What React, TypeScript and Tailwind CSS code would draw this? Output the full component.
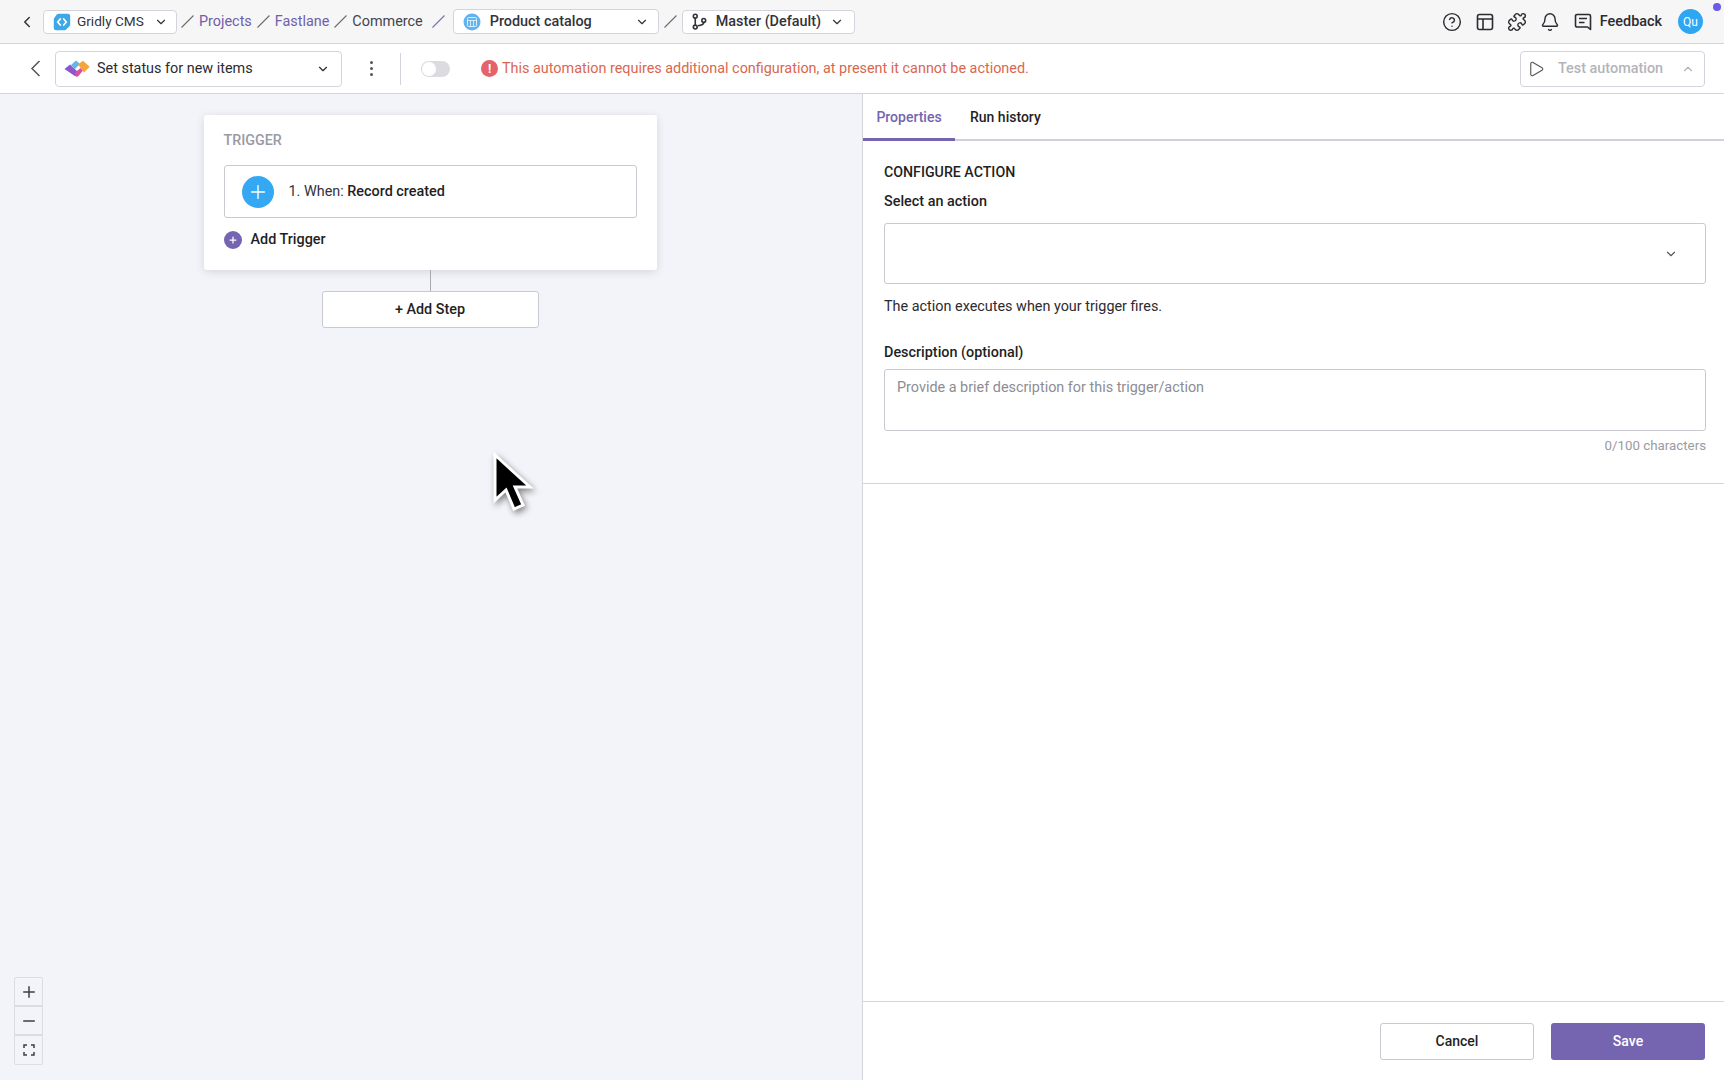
import { ChevronDown, ChevronLeft, ChevronUp, CircleHelp, Bell, Minus, Play, Plus, Puzzle } from 'lucide-react';

function Slash({ purple }: { purple?: boolean }) {
  return (
    <svg width="13" height="13" viewBox="0 0 13 13" className="shrink-0">
      <path d="M.5 12.500 12.500.5" stroke={purple ? '#7b6cb5' : '#6b6b72'} strokeWidth="1.100" fill="none" />
    </svg>
  );
}

function GridlyLogo() {
  return (
    <svg width="18" height="18" viewBox="0 0 18 18" className="shrink-0">
      <path d="M5.500.8h9.200a2.500 2.500 0 0 1 2.500 2.500v8.200a2.500 2.500 0 0 1-.8 1.800l-3.200 3.200a2.500 2.500 0 0 1-1.700.7H3.300a2.500 2.500 0 0 1-2.500-2.500V6.300a2.500 2.500 0 0 1 .8-1.800l2.200-3a2.500 2.500 0 0 1 1.700-.7z" fill="#3ea8e6" />
      <path d="M7.300 6 4.700 9l2.600 3M10.700 6l2.600 3-2.600 3" stroke="#fff" strokeWidth="1.700" fill="none" strokeLinecap="round" strokeLinejoin="round" />
    </svg>
  );
}

function CatalogLogo() {
  return (
    <svg width="18" height="18" viewBox="0 0 18 18" className="shrink-0">
      <circle cx="9" cy="9" r="8.500" fill="#62b3ee" />
      <rect x="4.500" y="4.500" width="9" height="9" rx="1" fill="none" stroke="#dbeefb" strokeWidth="1" />
      <path d="M4.500 7.500h9M7.500 7.500v6M10.500 7.500v6" stroke="#dbeefb" strokeWidth="0.900" />
    </svg>
  );
}

function AutomationLogo() {
  return (
    <svg width="26" height="17" viewBox="0 0 26 17" className="shrink-0">
      <path d="M7 5 12 .5 16 4l-5 5z" fill="#5cb8e8" />
      <path d="M.5 9 6 4.500l7.500 7L11.500 16.500z" fill="#8f55cf" />
      <path d="M11 12.500 16.500 8l2.500 2.500-4.500 5.500q-1 1-2.500.5z" fill="#dc4f9f" />
      <path d="M14 4.500 19 .8l6.700 6L20 12.500z" fill="#f5a53a" />
    </svg>
  );
}

function BranchIcon() {
  return (
    <svg width="17" height="17" viewBox="0 0 16 16" fill="none" stroke="#33333a" strokeWidth="1.500" className="shrink-0">
      <circle cx="4" cy="3" r="1.800" />
      <circle cx="4" cy="13.200" r="1.800" />
      <circle cx="12" cy="7" r="1.800" />
      <path d="M4 4.800v6.600M12 8.800c0 2.600-3 3-5.500 3.200" />
    </svg>
  );
}

function LayoutIcon() {
  return (
    <svg width="18" height="18" viewBox="0 0 18 18" fill="none" stroke="#2b2b31" strokeWidth="1.600">
      <rect x="1.500" y="1.500" width="15" height="15" rx="2" />
      <path d="M1.500 6h15M7 6v10.500" />
    </svg>
  );
}

function FeedbackIcon() {
  return (
    <svg width="18" height="18" viewBox="0 0 18 18" fill="none" stroke="#2b2b31" strokeWidth="1.600">
      <path d="M16.500 16.500 13.500 14H3a1.500 1.500 0 0 1-1.500-1.500V3A1.500 1.500 0 0 1 3 1.500h12A1.500 1.500 0 0 1 16.500 3z" strokeLinejoin="round" />
      <path d="M5 5.500h8M5 9.500h5.500" />
    </svg>
  );
}

function FitIcon() {
  return (
    <svg width="12" height="12" viewBox="0 0 12 12" fill="none" stroke="#3f3f46" strokeWidth="1.500">
      <path d="M1 4V1h3M8 1h3v3M11 8v3H8M4 11H1V8" />
    </svg>
  );
}

function BackArrow() {
  return (
    <svg width="11" height="17" viewBox="0 0 11 17" fill="none" stroke="#55555c" strokeWidth="1.500" className="shrink-0">
      <path d="M9.500 1 2 8.500 9.500 16" />
    </svg>
  );
}

function Cursor() {
  return (
    <svg width="42" height="62" viewBox="0 0 42 62" className="absolute left-[492px] top-[452px] drop-shadow-[2px_3px_3px_rgba(0,0,0,0.45)]">
      <path d="M3 3v45l11-10 8 19 9-4-8-18h15z" fill="#000" stroke="#fff" strokeWidth="3" strokeLinejoin="miter" />
    </svg>
  );
}

function Crumb({ children, purple }: { children: string; purple?: boolean }) {
  return <span className={purple ? 'text-[#6f60a8]' : 'text-[#44444c]'}>{children}</span>;
}

function TopBar() {
  return (
    <div className="flex h-[44px] shrink-0 items-center border-b border-[#d5d3de] bg-[#f6f6f7] pl-[18px] pr-[21px] text-[14.4px]">
      <ChevronLeft size={18} className="mr-[7px] shrink-0 text-[#33333a]" strokeWidth={2} />
      <div className="flex h-[24px] w-[134px] items-center rounded-[4px] border border-[#d5d3de] bg-white pl-[9px] pr-[8px] text-[13.6px] text-[#33333a]">
        <GridlyLogo />
        <span className="ml-[6px]">Gridly CMS</span>
        <ChevronDown size={14} className="ml-auto text-[#33333a]" />
      </div>
      <div className="ml-[4px] flex items-center gap-[5px]">
        <Slash />
        <Crumb purple>Projects</Crumb>
        <Slash />
        <Crumb purple>Fastlane</Crumb>
        <Slash />
        <Crumb>Commerce</Crumb>
      </div>
      <div className="ml-[9px]">
        <Slash purple />
      </div>
      <div className="ml-[8px] flex h-[25px] w-[206px] items-center rounded-[4px] border border-[#d5d3de] bg-white pl-[9px] pr-[9px] font-medium text-[#33333a]">
        <CatalogLogo />
        <span className="ml-[9px]">Product catalog</span>
        <ChevronDown size={14} className="ml-auto" />
      </div>
      <div className="mx-[5px]">
        <Slash />
      </div>
      <div className="flex h-[24px] w-[173px] items-center rounded-[4px] border border-[#d5d3de] bg-white pl-[8px] pr-[10px] font-medium text-[#33333a]">
        <BranchIcon />
        <span className="ml-[8px]">Master (Default)</span>
        <ChevronDown size={14} className="ml-auto" />
      </div>
      <div className="relative ml-auto flex items-center text-[#2b2b31]">
        <CircleHelp size={20} strokeWidth={1.7} />
        <div className="ml-[14px]"><LayoutIcon /></div>
        <Puzzle size={20} strokeWidth={1.7} className="ml-[13px]" />
        <Bell size={20} strokeWidth={1.7} className="ml-[13px]" />
        <div className="ml-[14px]"><FeedbackIcon /></div>
        <span className="ml-[8px] font-medium">Feedback</span>
        <div className="ml-[16px] flex h-[25px] w-[25px] items-center justify-center rounded-full bg-[#2ea6f2] text-[12px] text-white">Qu</div>
        <div className="absolute right-[-18px] top-[-6px] h-[8px] w-[8px] rounded-full bg-[#6a5be8]" />
      </div>
    </div>
  );
}

function AutomationBar() {
  return (
    <div className="flex h-[50px] shrink-0 items-center border-b border-[#d5d3de] bg-white pl-[30px] pr-[19px] text-[14.4px]">
      <BackArrow />
      <div className="ml-[14px] flex h-[36px] w-[287px] items-center rounded-[4px] border border-[#d5d3de] pl-[8px] pr-[11px] text-[#2b2b31]">
        <AutomationLogo />
        <span className="ml-[7px]">Set status for new items</span>
        <ChevronDown size={14} className="ml-auto" />
      </div>
      <div className="ml-[28px] flex flex-col gap-[3px]">
        <div className="h-[3px] w-[3px] rounded-full bg-[#55555c]" />
        <div className="h-[3px] w-[3px] rounded-full bg-[#55555c]" />
        <div className="h-[3px] w-[3px] rounded-full bg-[#55555c]" />
      </div>
      <div className="ml-[27px] h-[32px] w-px bg-[#d5d3de]" />
      <div className="ml-[20px] flex h-[16px] w-[29px] items-center rounded-full bg-[#dcdce0] pl-[1px]">
        <div className="h-[14px] w-[14px] rounded-full bg-white" />
      </div>
      <div className="ml-[31px] flex h-[17px] w-[17px] items-center justify-center rounded-full bg-[#e5636b] text-[12px] font-bold text-white">!</div>
      <span className="ml-[4px] text-[#d9674f]">This automation requires additional configuration, at present it cannot be actioned.</span>
      <div className="ml-auto flex h-[36px] w-[185px] items-center rounded-[4px] border border-[#d5d3de] pl-[6px] pr-[9px]">
        <Play size={18} strokeWidth={1.5} className="text-[#55555c]" />
        <span className="ml-[13px] font-medium text-[#b4b4bb]">Test automation</span>
        <ChevronUp size={14} className="ml-auto text-[#b4b4bb]" />
      </div>
    </div>
  );
}

function Canvas() {
  return (
    <div className="relative flex w-[862px] shrink-0 flex-col items-center bg-[#f3f4f9] pr-[2px] pt-[21px] text-[14.4px]">
      <div className="h-[155px] w-[453px] rounded-[3px] bg-white px-[20px] pt-[17px] shadow-[0_2px_10px_rgba(0,0,0,0.12)]">
        <div className="text-[14.3px] font-medium leading-[16px] text-[#9a9aa3]">TRIGGER</div>
        <div className="mt-[17px] flex h-[53px] items-center rounded-[3px] border border-[#c9c9d2] pl-[17px]">
          <div className="flex h-[32px] w-[32px] items-center justify-center rounded-full bg-[#35a8f3]">
            <Plus size={22} strokeWidth={1.5} className="text-white" />
          </div>
          <span className="ml-[15px] text-[#33333a]">1. When: <span className="font-medium text-[#1f1f24]">Record created</span></span>
        </div>
        <div className="mt-[11px] flex items-center">
          <div className="flex h-[18px] w-[18px] items-center justify-center rounded-full bg-[#7565b0]">
            <Plus size={10} strokeWidth={3} className="text-white" />
          </div>
          <span className="ml-[9px] font-medium text-[#1f1f24]">Add Trigger</span>
        </div>
      </div>
      <div className="h-[21px] w-px bg-[#a9a9b2]" />
      <div className="flex h-[37px] w-[217px] items-center justify-center rounded-[3px] border border-[#c9c9d2] bg-white font-medium text-[#1f1f24]">+ Add Step</div>
      <div className="absolute bottom-[15px] left-[14px] flex w-[29px] flex-col rounded-[2px] border border-[#dcdce2]">
        <div className="flex h-[29px] items-center justify-center border-b-2 border-[#dcdce2]">
          <Plus size={18} strokeWidth={2} className="text-[#3f3f46]" />
        </div>
        <div className="flex h-[29px] items-center justify-center border-b-2 border-[#dcdce2]">
          <Minus size={18} strokeWidth={2} className="text-[#3f3f46]" />
        </div>
        <div className="flex h-[28px] items-center justify-center">
          <FitIcon />
        </div>
      </div>
    </div>
  );
}

function ConfigPanel() {
  return (
    <div className="flex flex-1 flex-col border-l border-[#d5d3de] bg-white text-[14.4px] text-[#2b2b31]">
      <div className="flex h-[47px] shrink-0 border-b-2 border-[#d3d0de] text-[14px]">
        <div className="mb-[-2px] flex w-[92px] justify-center border-b-[3px] border-[#7565b0] pt-[13px] font-medium text-[#7565b0]">Properties</div>
        <div className="ml-[15px] pt-[13px] font-medium text-[#1f1f24]">Run history</div>
      </div>
      <div className="h-[343px] shrink-0 border-b border-[#d5d3de] pl-[21px] pr-[18px] pt-[22px]">
        <div className="text-[14.2px] font-medium leading-[18px] text-[#1f1f24]">CONFIGURE ACTION</div>
        <div className="mt-[12px] font-medium leading-[18px] text-[#1f1f24]">Select an action</div>
        <div className="mt-[12px] flex h-[61px] items-center justify-end rounded-[3px] border border-[#c9c9d2] pr-[27px]">
          <ChevronDown size={14} className="text-[#55555c]" />
        </div>
        <div className="mt-[14px] leading-[18px]">The action executes when your trigger fires.</div>
        <div className="mt-[28px] font-medium leading-[18px] text-[#1f1f24]">Description (optional)</div>
        <div className="mt-[7px] h-[62px] rounded-[3px] border border-[#c9c9d2] px-[12px] pt-[9px] leading-[18px] text-[#8d8d95]">Provide a brief description for this trigger/action</div>
        <div className="mt-[7px] text-right text-[13.3px] leading-[16px] text-[#9a9aa3]">0/100 characters</div>
      </div>
      <div className="mt-auto flex h-[79px] shrink-0 items-start justify-end gap-[17px] border-t border-[#d5d3de] pr-[19px] pt-[21px] text-[14px] font-medium">
        <div className="flex h-[37px] w-[154px] items-center justify-center rounded-[3px] border border-[#c9c9d2] text-[#1f1f24]">Cancel</div>
        <div className="flex h-[37px] w-[154px] items-center justify-center rounded-[3px] bg-[#7565b0] text-white">Save</div>
      </div>
    </div>
  );
}

export default function App() {
  return (
    <div className="relative flex h-screen w-screen flex-col overflow-hidden bg-white font-['Roboto',sans-serif]">
      <TopBar />
      <AutomationBar />
      <div className="flex min-h-0 flex-1">
        <Canvas />
        <ConfigPanel />
      </div>
      <Cursor />
    </div>
  );
}
